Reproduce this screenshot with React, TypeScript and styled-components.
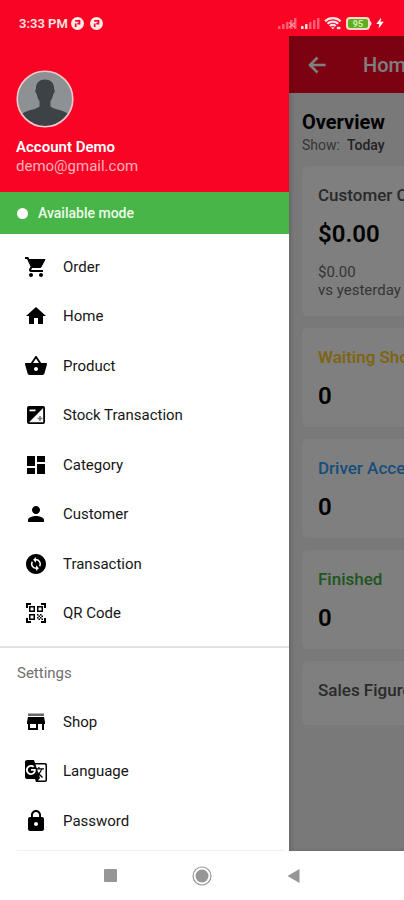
import React from "react";
import styled, { createGlobalStyle } from "styled-components";
import {
  MdChangeCircle,
  MdDashboard,
  MdGTranslate,
  MdHome,
  MdLock,
  MdPerson,
  MdQrCodeScanner,
} from "react-icons/md";

const RED = "#f90425";

const GlobalStyle = createGlobalStyle`
  *, *::before, *::after { box-sizing: border-box; }
  body {
    margin: 0;
    background: #fff;
    font-family: Roboto, "Liberation Sans", sans-serif;
    color: #000;
  }
  h1, h2, p, ul { margin: 0; padding: 0; }
  ul { list-style: none; }
  button { font: inherit; color: inherit; border: 0; background: none; padding: 0; cursor: pointer; }
`;

const Screen = styled.div`
  display: flex;
  flex-direction: column;
  height: 100vh;
  overflow: hidden;
`;

const StatusBar = styled.header`
  display: flex;
  align-items: center;
  justify-content: space-between;
  flex: none;
  height: 36px;
  padding: 10px 20px 0 19px;
  background: ${RED};
  color: #ffe3e3;
`;

const StatusGroup = styled.div<{ $gap: number }>`
  display: flex;
  align-items: center;
  gap: ${(p) => p.$gap}px;
`;

const Clock = styled.time`
  margin-right: -3px;
  font-size: 13px;
  font-weight: 600;
`;

const Body = styled.div`
  display: flex;
  flex: 1;
  min-height: 0;
`;

const Drawer = styled.aside`
  flex: none;
  width: 289px;
  overflow: hidden;
  background: #fff;
`;

const Profile = styled.section`
  padding: 34px 16px 16px;
  background: ${RED};
  color: #fff;
`;

const Avatar = styled.svg`
  display: block;
  width: 58px;
  height: 58px;
  margin-bottom: 9px;
`;

const ProfileName = styled.h2`
  font-size: 15px;
  line-height: 20px;
  font-weight: 600;
`;

const ProfileEmail = styled.p`
  font-size: 15px;
  line-height: 19px;
  color: #ffb3b9;
`;

const Mode = styled.button`
  display: flex;
  align-items: center;
  gap: 10px;
  width: 100%;
  height: 42px;
  padding: 0 17px;
  background: #48b549;
  color: #eefbea;
  font-size: 14px;
  font-weight: 500;

  &::before {
    content: "";
    width: 11px;
    height: 11px;
    border-radius: 50%;
    background: #fff;
  }
`;

const Menu = styled.ul<{ $minHeight: number }>`
  display: grid;
  grid-auto-rows: 1fr;
  min-height: ${(p) => p.$minHeight}px;
`;

const MenuButton = styled.button`
  display: flex;
  align-items: center;
  gap: 15px;
  width: 100%;
  height: 100%;
  padding: 0 24px;
  text-align: left;
  font-size: 15px;
  color: #161616;

  svg {
    width: 24px;
    height: 24px;
    color: #000;
  }
`;

const MainMenu = styled.nav`
  padding: 8px 0;
  border-bottom: 2px solid #e2e2e2;
`;

const SettingsMenu = styled.nav`
  padding-bottom: 4px;
`;

const SettingsTitle = styled.h2`
  padding: 15px 17px 14px;
  font-size: 15px;
  line-height: 20px;
  font-weight: 400;
  color: #6f6f6f;
`;

const Divider = styled.hr`
  height: 1px;
  margin: 0 4px 0 17px;
  border: 0;
  background: #f1f1f1;
`;

const Page = styled.main`
  position: relative;
  flex: 1;
  min-width: 0;
  overflow: hidden;
  background: #f3f3f3;
`;

const Scrim = styled.div`
  position: absolute;
  inset: 0;
  background: rgba(0, 0, 0, 0.5);
  box-shadow: inset 2px 0 4px rgba(0, 0, 0, 0.16);
`;

const PageContent = styled.div`
  width: 100vw;
`;

const AppBar = styled.header`
  display: flex;
  align-items: center;
  gap: 34px;
  height: 57px;
  padding: 0 16px;
  background: ${RED};
  color: #fff;
`;

const BackButton = styled.button`
  display: flex;

  svg {
    width: 24px;
    height: 24px;
  }
`;

const AppTitle = styled.h1`
  font-size: 20px;
  font-weight: 500;
`;

const Overview = styled.section`
  padding: 16px 13px;
`;

const OverviewTitle = styled.h2`
  font-size: 20px;
  line-height: 26px;
  font-weight: 700;
`;

const Filter = styled.p`
  display: flex;
  gap: 7px;
  margin-bottom: 11px;
  font-size: 14px;
  line-height: 20px;
  color: #6c6c6c;
`;

const FilterValue = styled.span`
  color: #444;
  font-weight: 500;
`;

const Cards = styled.div`
  display: grid;
  gap: 12px;
`;

const Card = styled.article`
  min-height: 64px;
  padding: 17px 16px;
  border-radius: 6px;
  background: #fff;
`;

const CardTitle = styled.h2<{ $color?: string }>`
  font-size: 17px;
  line-height: 24px;
  font-weight: 500;
  color: ${(p) => p.$color ?? "#555"};
`;

const CardValue = styled.p`
  margin-top: 13px;
  font-size: 24px;
  line-height: 28px;
  font-weight: 600;
`;

const CardNote = styled.p`
  margin-top: 15px;
  font-size: 15px;
  line-height: 18px;
  color: #6a6a6a;
`;

const SystemNav = styled.nav`
  display: grid;
  grid-template-columns: repeat(3, 1fr);
  place-items: center;
  flex: none;
  height: 49px;
  padding: 0 65px;
  background: #fff;
  color: #969696;

  svg {
    display: block;
  }
`;

const BackArrow = () => (
  <svg viewBox="0 0 24 24" fill="none" stroke="currentColor" strokeWidth="2.600" aria-hidden="true">
    <path d="M20.500 12H5.500M12.500 4.500L5 12l7.500 7.500" />
  </svg>
);

const CartIcon = () => (
  <svg viewBox="0 0 24 24" fill="currentColor" aria-hidden="true">
    <path d="M7 18c-1.100 0-1.990.9-1.990 2S5.900 22 7 22s2-.9 2-2-.9-2-2-2zM1 2v2h2l3.600 7.590-1.350 2.450c-.16.28-.25.61-.25.96 0 1.100.9 2 2 2h12v-2H7.420c-.14 0-.25-.11-.25-.25l.03-.12.9-1.630h7.450c.75 0 1.410-.41 1.750-1.030l3.580-6.490c.08-.14.12-.31.12-.48 0-.55-.45-1-1-1H5.210l-.94-2H1zm16 16c-1.100 0-1.990.9-1.990 2s.89 2 1.990 2 2-.9 2-2-.9-2-2-2z" />
    <path d="M4 4h17.500L17 12.500H7.500z" />
  </svg>
);

const BasketIcon = () => (
  <svg viewBox="0 0 24 24" fill="currentColor" aria-hidden="true">
    <path d="M17.210 9l-4.380-6.560c-.19-.28-.51-.42-.83-.42-.32 0-.64.14-.83.43L6.790 9H2c-.55 0-1 .45-1 1 0 .09.010.18.040.27l2.540 9.270c.23.84 1 1.460 1.920 1.460h13c.92 0 1.690-.62 1.930-1.460l2.540-9.270L23 10c0-.55-.45-1-1-1h-4.790zM9 9l3-4.400L15 9H9zm3 8c-1.100 0-2-.9-2-2s.9-2 2-2 2 .9 2 2-.9 2-2 2z" />
  </svg>
);

const StockIcon = () => (
  <svg viewBox="0 0 24 24" aria-hidden="true">
    <rect x="3" y="3" width="18" height="18" rx="2" fill="currentColor" />
    <path d="M19.200 5v14.200H5z" fill="#fff" />
    <path d="M5.500 6.500h6v1.800h-6z" fill="#fff" />
    <path d="M15.200 13v1.700h-1.700v1.600h1.700V18h1.600v-1.700h1.700v-1.600h-1.700V13z" fill="#777" />
  </svg>
);

const StoreIcon = () => (
  <svg viewBox="0 0 24 24" fill="currentColor" aria-hidden="true">
    <path d="M4 3.500h16V6H4z" opacity="0.6" />
    <path d="M21 14v-2l-1-5H4l-1 5v2h1v6h10v-6h4v6h2v-6h1zm-9 4H6v-4h6v4z" />
  </svg>
);

type MenuItem = [string, React.ComponentType];

const mainItems: MenuItem[] = [
  ["Order", CartIcon],
  ["Home", MdHome],
  ["Product", BasketIcon],
  ["Stock Transaction", StockIcon],
  ["Category", MdDashboard],
  ["Customer", MdPerson],
  ["Transaction", MdChangeCircle],
  ["QR Code", MdQrCodeScanner],
];

const settingsItems: MenuItem[] = [
  ["Shop", StoreIcon],
  ["Language", MdGTranslate],
  ["Password", MdLock],
];

const orders = [
  { title: "Waiting Shop", color: "#ffc61a", value: 0 },
  { title: "Driver Accepted", color: "#2f9bf4", value: 0 },
  { title: "Finished", color: "#3cae3c", value: 0 },
];

const MenuItems = ({ items, minHeight }: { items: MenuItem[]; minHeight: number }) => (
  <Menu $minHeight={minHeight}>
    {items.map(([label, Icon]) => (
      <li key={label}>
        <MenuButton type="button">
          <Icon />
          {label}
        </MenuButton>
      </li>
    ))}
  </Menu>
);

const NotificationIcon = () => (
  <svg width="13" height="13" viewBox="0 0 13 13" aria-hidden="true">
    <circle cx="6.500" cy="6.500" r="6.500" fill="#ffe9e6" />
    <path d="M4.700 10V6.500M4.200 3.900h4.300v2.800H6.300" fill="none" stroke={RED} strokeWidth="1.700" />
  </svg>
);

const Signal = ({ strong, crossed }: { strong: number; crossed?: boolean }) => (
  <svg width="19" height="12" viewBox="0 0 19 12" aria-hidden="true">
    {[0, 1, 2, 3, 4].map((i) => (
      <rect
        key={i}
        x={i * 4}
        y={9 - i * 2}
        width="2.500"
        height={3 + i * 2}
        rx="0.600"
        fill="#ffe3e3"
        opacity={i < strong ? 1 : 0.4}
      />
    ))}
    {crossed && <path d="M11 5.500l6 5M17 5.500l-6 5" stroke="#ff9a9a" strokeWidth="1.200" />}
  </svg>
);

const WifiIcon = () => (
  <svg width="18" height="14" viewBox="0 0 18 14" fill="none" stroke="#ffe3e3" aria-hidden="true">
    <path d="M1 5.200a11.400 11.400 0 0 1 15.600 0M3.400 7.700a8 8 0 0 1 10.800 0M5.800 10a4.800 4.800 0 0 1 6 0" strokeWidth="2.200" />
    <path d="M7 11.200h3.600l-1.800 2.200z" fill="#ffe3e3" stroke="none" />
    <path d="M12.800 12h3.600" strokeWidth="2.400" />
  </svg>
);

const BatteryIcon = () => (
  <svg width="26" height="13" viewBox="0 0 26 13" role="img" aria-label="Battery 95%">
    <rect x="1" y="1" width="22" height="11" rx="3" fill="#5fae1c" stroke="#ffd9cf" strokeWidth="2" />
    <path d="M24 4c2 0.500 2 4.500 0 5z" fill="#ffd9cf" />
    <text x="12" y="9.500" textAnchor="middle" fontSize="9" fontWeight="700" fill="#d3f2b4">
      95
    </text>
  </svg>
);

const BoltIcon = () => (
  <svg width="8" height="12" viewBox="0 0 8 12" aria-hidden="true">
    <path d="M5.200 0.500L0.300 7h3L2.600 11.500 7.700 4.800H4.500z" fill="#fff" />
  </svg>
);

export default function App() {
  return (
    <>
      <GlobalStyle />
      <Screen>
        <StatusBar>
          <StatusGroup $gap={6}>
            <Clock>3:33 PM</Clock>
            <NotificationIcon />
            <NotificationIcon />
          </StatusGroup>
          <StatusGroup $gap={4}>
            <Signal strong={0} crossed />
            <Signal strong={2} />
            <WifiIcon />
            <BatteryIcon />
            <BoltIcon />
          </StatusGroup>
        </StatusBar>

        <Body>
          <Drawer>
            <Profile>
              <Avatar viewBox="0 0 58 58" role="img" aria-label="Account Demo">
                <defs>
                  <clipPath id="avatar-clip">
                    <circle cx="29" cy="29" r="27" />
                  </clipPath>
                </defs>
                <circle cx="29" cy="29" r="28" fill="#8d9194" />
                <g clipPath="url(#avatar-clip)" fill="#3d4246">
                  <path d="M20 19c-0.500-6 3.500-9.500 9-9.500s9.500 3.500 9 9.500c1.300 0.500 0.700 4-0.800 5.500-0.500 3-1.500 5-2.700 6.500v5.500c3 2.500 8 3 12 4.500 4.500 1.500 7 4 8.500 8V60H3V49c1.500-4 4-6.500 8.500-8 4-1.500 9-2 12-4.500V31c-1.200-1.500-2.200-3.500-2.700-6.500C19.300 23 18.700 19.500 20 19z" />
                </g>
                <circle cx="29" cy="29" r="27.800" fill="none" stroke="#f3c9cb" strokeWidth="1.600" />
              </Avatar>
              <ProfileName>Account Demo</ProfileName>
              <ProfileEmail>demo@gmail.com</ProfileEmail>
            </Profile>
            <Mode type="button">Available mode</Mode>
            <MainMenu aria-label="Main">
              <MenuItems items={mainItems} minHeight={396} />
            </MainMenu>
            <SettingsMenu aria-label="Settings">
              <SettingsTitle>Settings</SettingsTitle>
              <MenuItems items={settingsItems} minHeight={149} />
            </SettingsMenu>
            <Divider />
          </Drawer>

          <Page>
            <PageContent>
              <AppBar>
                <BackButton type="button" aria-label="Back">
                  <BackArrow />
                </BackButton>
                <AppTitle>Home</AppTitle>
              </AppBar>
              <Overview>
                <OverviewTitle>Overview</OverviewTitle>
                <Filter>
                  Show: <FilterValue>Today</FilterValue>
                </Filter>
                <Cards>
                  <Card>
                    <CardTitle>Customer Order</CardTitle>
                    <CardValue>$0.00</CardValue>
                    <CardNote>
                      $0.00
                      <br />
                      vs yesterday
                    </CardNote>
                  </Card>
                  {orders.map((o) => (
                    <Card key={o.title}>
                      <CardTitle $color={o.color}>{o.title}</CardTitle>
                      <CardValue>{o.value}</CardValue>
                    </Card>
                  ))}
                  <Card>
                    <CardTitle>Sales Figures</CardTitle>
                  </Card>
                </Cards>
              </Overview>
            </PageContent>
            <Scrim />
          </Page>
        </Body>

        <SystemNav aria-label="System">
          <button type="button" aria-label="Recent apps">
            <svg width="13" height="13" viewBox="0 0 13 13">
              <rect width="13" height="13" rx="1" fill="currentColor" />
            </svg>
          </button>
          <button type="button" aria-label="Home screen">
            <svg width="20" height="20" viewBox="0 0 20 20">
              <circle cx="10" cy="10" r="9" fill="none" stroke="currentColor" strokeWidth="1.200" />
              <circle cx="10" cy="10" r="6.500" fill="currentColor" />
            </svg>
          </button>
          <button type="button" aria-label="Back">
            <svg width="13" height="14" viewBox="0 0 13 14">
              <path d="M12.500 0v14L0.500 7z" fill="currentColor" />
            </svg>
          </button>
        </SystemNav>
      </Screen>
    </>
  );
}
